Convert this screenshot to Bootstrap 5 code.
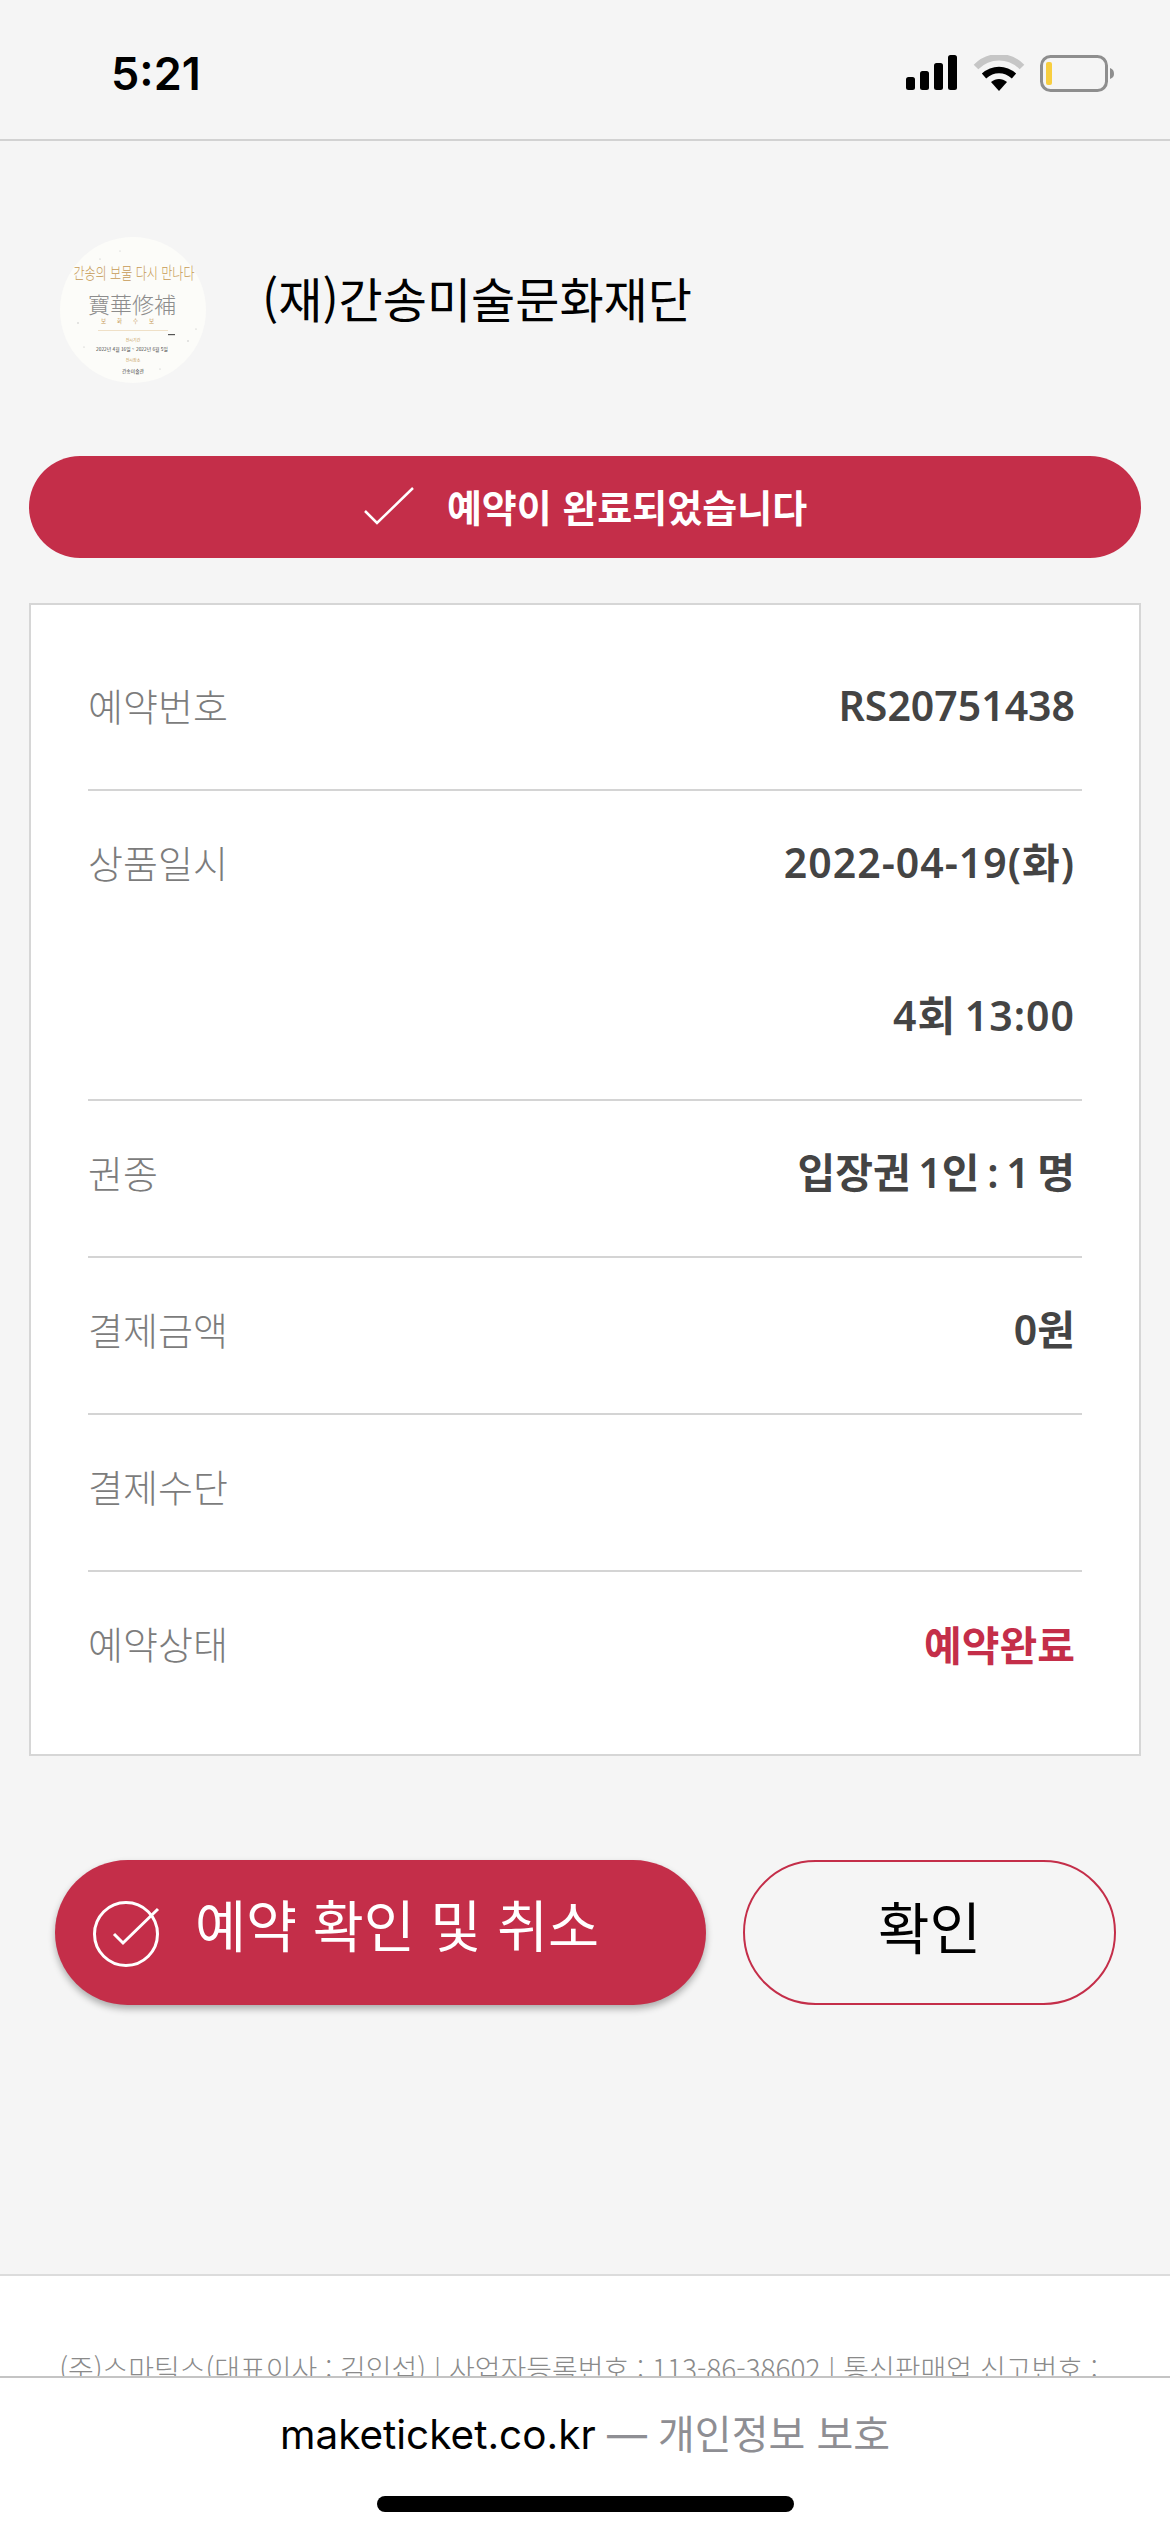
<!DOCTYPE html>
<html lang="ko">
<head>
<meta charset="utf-8">
<title>예약 완료</title>
<link rel="stylesheet" href="https://cdn.jsdelivr.net/npm/bootstrap@5.3.0/dist/css/bootstrap.min.css">
<style>
html,body{margin:0;height:2532px;overflow:hidden;background:#f5f5f5}
body{font-family:"Noto Sans CJK KR","Noto Sans",sans-serif;color:#000}
.shell{position:relative;height:2532px;overflow:hidden}
.statusbar{height:141px;border-bottom:2px solid #d2d2d2;padding:0 55px 0 111px}
.clock{font-family:Inter,"Liberation Sans",sans-serif;font-weight:600;font-size:45px;line-height:1;margin-top:8px}
.sysicons{margin-top:8px}
.venue{padding:96px 0 0 60px;gap:56px;height:242px}
.venue-title{font-size:48px;line-height:1;font-weight:400;margin:0 0 26px}
.logo-disc{width:146px;height:146px;display:block}
.done-banner{margin:73px 29px 0;height:102px;background:#c42e49;color:#fff;border-radius:51px;gap:32px;font-size:38px;font-weight:700;padding:0 0 3px}
.detail-box{margin:45px 29px 0;height:1153px;background:#fff;border:2px solid #d6d6d6;padding:29px 57px 0 57px}
.detail-row{padding:41px 0 54px;border-bottom:2px solid #d4d4d4;font-size:38px;line-height:60px}
.detail-row:last-child{border-bottom:0}
.detail-key{color:#7c7c7c;font-weight:300}
.detail-val{color:#444;font-weight:600;font-size:41px;word-spacing:-3px;font-family:"Noto Sans","Noto Sans CJK KR",sans-serif;text-align:right;padding-right:7px}
.val-stack{gap:93px;letter-spacing:1px}
.val-red{color:#c42e49;font-family:"Noto Sans CJK KR",sans-serif;font-weight:700}
.action-row{margin:104px 54px 0 55px;gap:37px;height:145px}
.act-main{width:651px;height:145px;padding:0 0 18px 140px;background:#c42e49;border:0;border-radius:73px;color:#fff;font-size:55.500px;font-weight:400;line-height:1;box-shadow:0 4px 7px rgba(0,0,0,.3);position:relative;text-align:left}
.act-main:hover,.act-main:active{background:#c42e49;color:#fff}
.act-icon{position:absolute;left:38px;top:39px}
.act-ok{width:373px;height:145px;padding:0 0 16px;background:transparent;border:2px solid #c42e49;border-radius:73px;color:#000;font-size:56px;line-height:1}
.act-ok:hover,.act-ok:active{background:transparent;color:#000}
.legal{margin-top:269px;background:#fff;border-top:2px solid #dcdcdc;height:260px;padding:72px 13px 0 0;text-align:center;font-size:28px;line-height:40px;color:#8a8a8a;font-weight:300}
.urlbar{position:absolute;left:0;right:0;top:2376px;height:156px;background:#fff;border-top:2px solid #c4c4c4}
.url-text{font-size:40px;line-height:1;padding-top:34px;font-weight:400;color:#8e8e93}
.url-host{font-family:Inter,"Liberation Sans",sans-serif;font-size:40.500px;color:#000;font-weight:400}
.url-dash{font-family:Inter,"Liberation Sans",sans-serif}
.home-pill{width:417px;height:16px;border-radius:8px;background:#000;margin:40px auto 0}
</style>
</head>
<body>
<div class="shell">
  <div class="statusbar d-flex justify-content-between align-items-center">
    <div class="clock">5:21</div>
    <svg class="sysicons" width="209" height="38" viewBox="0 0 209 38">
      <g fill="#000">
        <rect x="0" y="22" width="9" height="13" rx="2.5"/>
        <rect x="14" y="16" width="9" height="19" rx="2.5"/>
        <rect x="28" y="8" width="9" height="27" rx="2.5"/>
        <rect x="42" y="0" width="9" height="35" rx="2.5"/>
      </g>
      <path d="M70 12 C83 -1 103 -1 116 12" fill="none" stroke="#c6c6c6" stroke-width="6.5"/>
      <path d="M78 21 C87 13 99 13 108 21" fill="none" stroke="#000" stroke-width="6.5"/>
      <path d="M85 27 C90 23 96 23 101 27 L93 36 Z" fill="#000"/>
      <rect x="135.500" y="1.500" width="65" height="34" rx="9" fill="none" stroke="#8e8e8e" stroke-width="3"/>
      <rect x="140" y="7" width="6" height="23" rx="2" fill="#f8ce3f"/>
      <path d="M204 13 C207 14 208 16 208 19 C208 21 207 23 204 24 Z" fill="#8e8e8e"/>
    </svg>
  </div>

  <div class="venue d-flex align-items-center">
    <svg class="logo-disc" viewBox="0 0 146 146" role="img" aria-label="보화수보 포스터">
      <circle cx="73" cy="73" r="73" fill="#fcfcf9"/>
      <g fill="#bbb">
        <circle cx="18" cy="86" r=".7"/><circle cx="128" cy="104" r=".7"/><circle cx="40" cy="22" r=".6"/>
        <circle cx="110" cy="28" r=".6"/><circle cx="136" cy="92" r=".6"/><circle cx="60" cy="14" r=".5"/>
        <circle cx="24" cy="110" r=".6"/><circle cx="100" cy="132" r=".6"/>
      </g>
      <rect x="108" y="97" width="7" height="1.200" fill="#555"/>
      <text transform="translate(74 42) scale(.78 1)" text-anchor="middle" font-size="15.500" fill="#c69a55" font-family="Noto Sans CJK KR,sans-serif" font-weight="300">간송의 보물 다시 만나다</text>
      <text x="72" y="76" text-anchor="middle" font-size="22" fill="#8c8c8c" font-family="Noto Sans CJK KR,sans-serif" font-weight="300">寶華修補</text>
      <text x="73" y="86" text-anchor="middle" font-size="5.500" fill="#c69a55" font-family="Noto Sans CJK KR,sans-serif" letter-spacing="11">보화수보</text>
      <rect x="38" y="93" width="70" height=".8" fill="#ecd9bb"/>
      <text x="73" y="105" text-anchor="middle" font-size="4" fill="#c69a55" font-family="Noto Sans CJK KR,sans-serif">전시기간</text>
      <text x="72" y="114" text-anchor="middle" font-size="4.800" fill="#444" font-family="Noto Sans CJK KR,sans-serif">2022년 4월 16일 ~ 2022년 6월 5일</text>
      <text x="73" y="125" text-anchor="middle" font-size="4" fill="#c69a55" font-family="Noto Sans CJK KR,sans-serif">전시장소</text>
      <text x="73" y="136" text-anchor="middle" font-size="4.800" fill="#444" font-family="Noto Sans CJK KR,sans-serif">간송미술관</text>
    </svg>
    <h1 class="venue-title">(재)간송미술문화재단</h1>
  </div>

  <div class="done-banner d-flex justify-content-center align-items-center">
    <svg width="52" height="40" viewBox="0 0 52 40"><path d="M2 25 L14 37 L50 2" fill="none" stroke="#fff" stroke-width="2.500"/></svg>
    <span>예약이 완료되었습니다</span>
  </div>

  <div class="detail-box">
    <div class="detail-row d-flex justify-content-between">
      <span class="detail-key">예약번호</span><span class="detail-val">RS20751438</span>
    </div>
    <div class="detail-row d-flex justify-content-between">
      <span class="detail-key">상품일시</span>
      <div class="detail-val val-stack d-flex flex-column"><span>2022-04-19(화)</span><span>4회 13:00</span></div>
    </div>
    <div class="detail-row d-flex justify-content-between">
      <span class="detail-key">권종</span><span class="detail-val">입장권 1인 : 1 명</span>
    </div>
    <div class="detail-row d-flex justify-content-between">
      <span class="detail-key">결제금액</span><span class="detail-val">0원</span>
    </div>
    <div class="detail-row d-flex justify-content-between">
      <span class="detail-key">결제수단</span><span class="detail-val"></span>
    </div>
    <div class="detail-row d-flex justify-content-between">
      <span class="detail-key">예약상태</span><span class="detail-val val-red">예약완료</span>
    </div>
  </div>

  <div class="action-row d-flex">
    <button type="button" class="btn act-main">
      <svg class="act-icon" width="68" height="68" viewBox="0 0 68 68"><circle cx="33" cy="35" r="31.500" fill="none" stroke="#fff" stroke-width="3"/><path d="M21 35 L30 44 L65 10" fill="none" stroke="#fff" stroke-width="3"/></svg>
      예약 확인 및 취소
    </button>
    <button type="button" class="btn act-ok">확인</button>
  </div>

  <div class="legal">(주)스마틱스(대표이사 : 김인섭) | 사업자등록번호 : 113-86-38602 | 통신판매업 신고번호 :</div>

  <div class="urlbar text-center">
    <div class="url-text"><span class="url-host">maketicket.co.kr</span> <span class="url-dash">—</span> 개인정보 보호</div>
    <div class="home-pill"></div>
  </div>
</div>
<script src="https://cdn.jsdelivr.net/npm/bootstrap@5.3.0/dist/js/bootstrap.bundle.min.js"></script>
</body>
</html>
